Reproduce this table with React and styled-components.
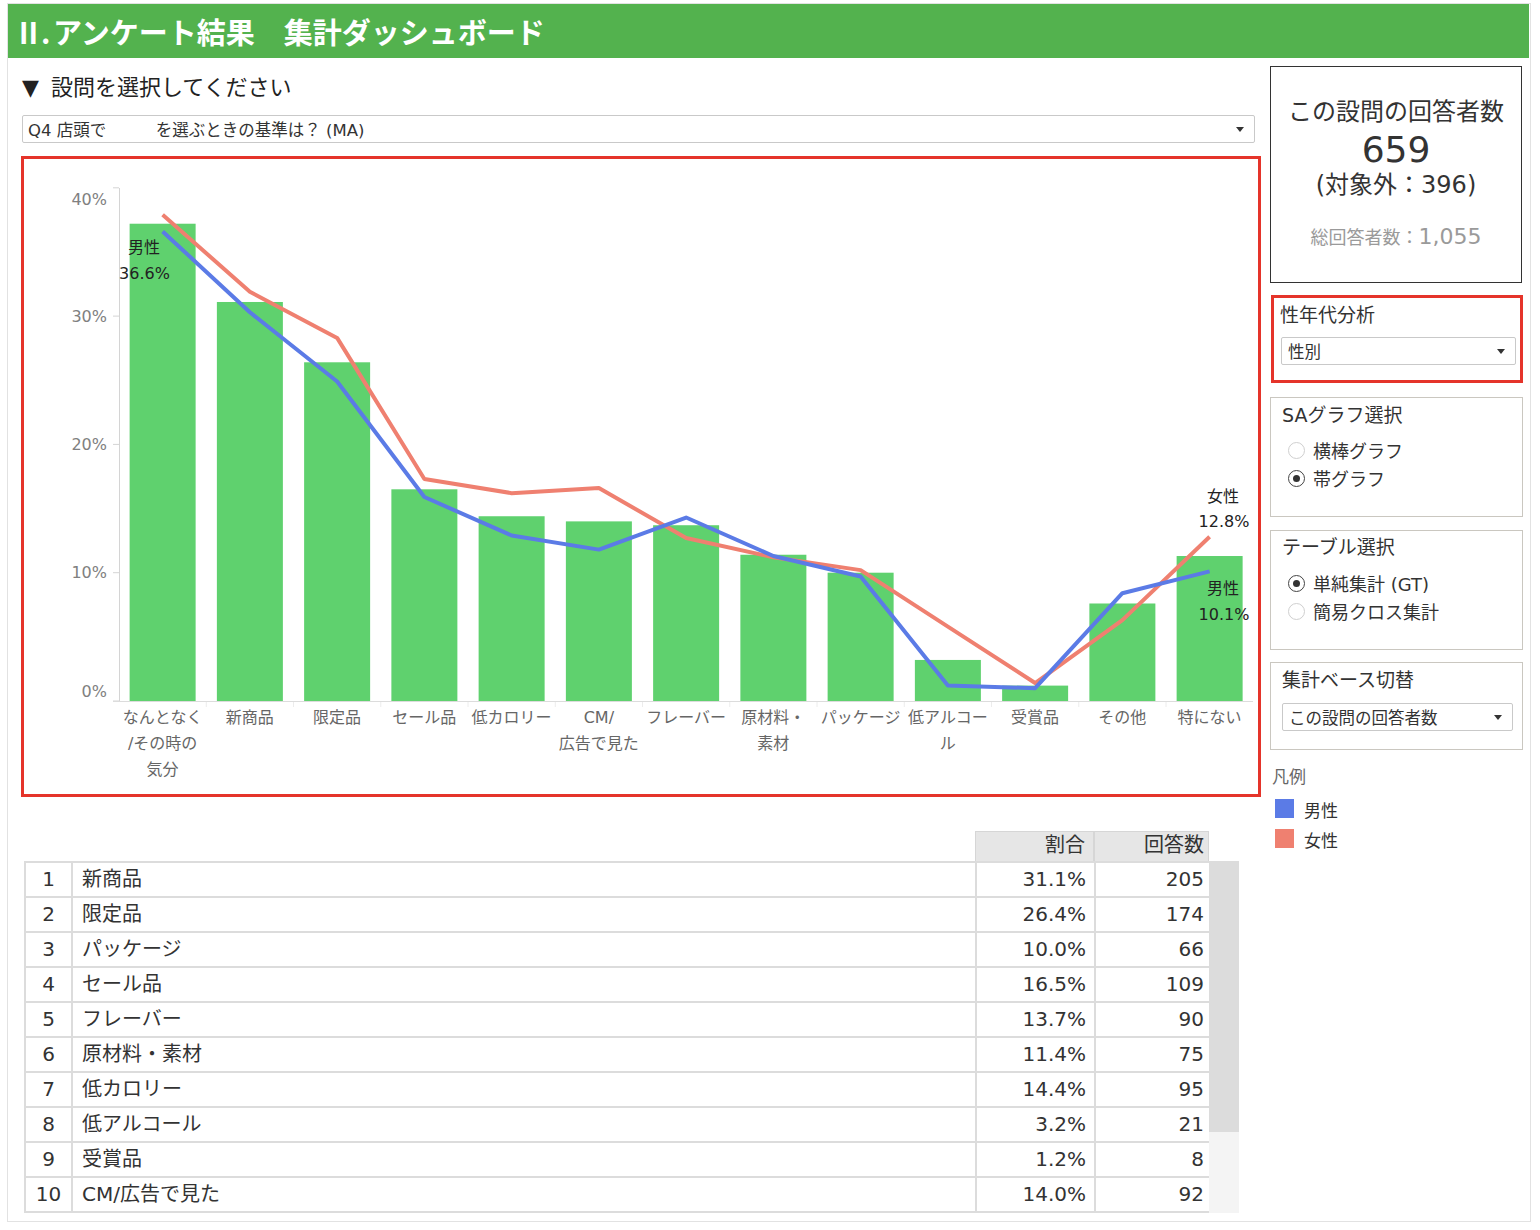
import React from "react";
import styled, { createGlobalStyle } from "styled-components";

const GlobalStyle = createGlobalStyle`
  body {
    margin: 0;
    background: #ffffff;
    font-family: "DejaVu Sans", "Noto Sans CJK JP", sans-serif;
    color: #333;
  }
`;

const Frame = styled.div`
  box-sizing: border-box;
  margin: 3px 0 0 7px;
  width: 1524px;
  height: 1219px;
  border: 1px solid #e2e2e2;
`;

const Header = styled.div`
  height: 54px;
  margin-right: 1px;
  background: #53b24e;
  color: #fff;
  font-family: "Noto Sans CJK JP", sans-serif;
  font-weight: 700;
  font-size: 29px;
  line-height: 54px;
  padding-left: 6px;
  white-space: pre;
`;

const Numeral = styled.span`
  letter-spacing: -2px;
  margin-right: -2px;
`;

const Body = styled.div`
  display: flex;
  align-items: flex-start;
`;

const Main = styled.div`
  width: 1240px;
  margin-left: 13px;
`;

const Side = styled.div`
  width: 253px;
  margin-left: 9px;
`;

const Prompt = styled.div`
  margin-top: 18px;
  padding-left: 1px;
  height: 24px;
  line-height: 24px;
  font-size: 22px;
  color: #222;
  display: flex;
  gap: 12px;
`;

const Select = styled.div`
  box-sizing: border-box;
  display: flex;
  align-items: center;
  justify-content: space-between;
  width: ${(p) => p.$width}px;
  height: 28px;
  margin: ${(p) => p.$margin || "0"};
  padding: 0 10px 0 ${(p) => p.$padLeft || 6}px;
  border: 1px solid #c9c9c9;
  border-radius: 2px;
  background: #fff;
  font-size: 16.5px;
  color: #333;
  white-space: pre;
`;

const Caret = styled.span`
  width: 0;
  height: 0;
  border-left: 4px solid transparent;
  border-right: 4px solid transparent;
  border-top: 5px solid #333;
`;

const ChartBox = styled.div`
  box-sizing: border-box;
  margin-top: 13px;
  width: 1240px;
  height: 641px;
  border: 3px solid #e5342a;
`;

const ChartSvg = styled.svg`
  display: block;
  text {
    font-family: "DejaVu Sans", "Noto Sans CJK JP", sans-serif;
    font-size: 16px;
  }
`;

const TableWrap = styled.div`
  margin: 34px 0 0 3px;
  width: 1215px;
`;

const HeadRow = styled.div`
  display: grid;
  grid-template-columns: 951px 119px 115px;
  height: 30px;
`;

const HeadCell = styled.div`
  box-sizing: border-box;
  background: ${(p) => (p.$blank ? "transparent" : "#e6e6e6")};
  border: ${(p) => (p.$blank ? "none" : "1px solid #d6d6d6")};
  border-bottom: none;
  text-align: right;
  padding-right: ${(p) => p.$pad}px;
  font-size: 20px;
  line-height: 27px;
  color: #333;
`;

const TableBody = styled.div`
  display: flex;
`;

const Grid = styled.div`
  display: grid;
  grid-template-columns: 45px 902px 117px 113px;
  grid-auto-rows: 33px;
  gap: 2px;
  padding: 2px 0 2px 2px;
  background: #dcdcdc;
`;

const Cell = styled.div`
  background: #fff;
  font-size: 20px;
  line-height: 33px;
  color: #333;
  text-align: ${(p) => p.$align || "left"};
  padding: ${(p) => p.$pad || "0"};
  white-space: nowrap;
`;

const ScrollTrack = styled.div`
  width: 30px;
  background: #f4f4f4;
`;

const ScrollThumb = styled.div`
  height: 271px;
  background: #dcdcdc;
`;

const CountCard = styled.div`
  box-sizing: border-box;
  margin-top: 8px;
  width: 252px;
  height: 217px;
  border: 1px solid #333;
  padding-top: 30px;
  display: flex;
  flex-direction: column;
  align-items: center;
  color: #333;
`;

const CountLine = styled.div`
  font-size: ${(p) => p.$size}px;
  line-height: ${(p) => p.$lh}px;
  margin-top: ${(p) => p.$mt || 0}px;
  color: ${(p) => p.$color || "#333"};
  white-space: nowrap;
`;

const Small = styled.span`
  font-size: 18px;
`;

const Card = styled.div`
  box-sizing: border-box;
  width: ${(p) => (p.$alert ? 252 : 253)}px;
  height: ${(p) => p.$h}px;
  margin: ${(p) => p.$mt}px 0 0 ${(p) => (p.$alert ? 1 : 0)}px;
  border: ${(p) => (p.$alert ? "3px solid #e5342a" : "1px solid #cac7c0")};
  padding: ${(p) => p.$pt}px 0 0 ${(p) => (p.$alert ? 6 : 11)}px;
`;

const CardTitle = styled.div`
  font-size: 19px;
  line-height: 22px;
  color: #333;
`;

const RadioList = styled.div`
  margin: ${(p) => p.$mt}px 0 0 6px;
`;

const RadioRow = styled.div`
  display: flex;
  align-items: center;
  gap: 8px;
  height: 28px;
  font-size: 18px;
  color: #333;
`;

const RadioDot = styled.span`
  box-sizing: border-box;
  width: 17px;
  height: 17px;
  border-radius: 50%;
  border: ${(p) => (p.$on ? "1.5px solid #444" : "1px solid #cfcfcf")};
  display: flex;
  align-items: center;
  justify-content: center;
  &::after {
    content: "";
    width: 7px;
    height: 7px;
    border-radius: 50%;
    background: ${(p) => (p.$on ? "#333" : "transparent")};
  }
`;

const LegendTitle = styled.div`
  margin: 17px 0 0 2px;
  font-size: 17px;
  line-height: 20px;
  color: #666;
`;

const LegendList = styled.div`
  margin: 9px 0 0 5px;
`;

const LegendRow = styled.div`
  display: flex;
  align-items: flex-start;
  gap: 10px;
  height: 30px;
`;

const Swatch = styled.span`
  width: 19px;
  height: 19px;
  margin-top: 3px;
  background: ${(p) => p.$color};
`;

const LegendLabel = styled.span`
  font-size: 17px;
  line-height: 31px;
  color: #333;
`;

const cats = [
  { label: ["なんとなく", "/その時の", "気分"], total: 37.2, m: 36.6, f: 37.9 },
  { label: ["新商品"], total: 31.1, m: 30.3, f: 31.9 },
  { label: ["限定品"], total: 26.4, m: 24.9, f: 28.3 },
  { label: ["セール品"], total: 16.5, m: 15.9, f: 17.3 },
  { label: ["低カロリー"], total: 14.4, m: 12.9, f: 16.2 },
  { label: ["CM/", "広告で見た"], total: 14.0, m: 11.8, f: 16.6 },
  { label: ["フレーバー"], total: 13.7, m: 14.3, f: 12.7 },
  { label: ["原材料・", "素材"], total: 11.4, m: 11.3, f: 11.2 },
  { label: ["パッケージ"], total: 10.0, m: 9.7, f: 10.2 },
  { label: ["低アルコー", "ル"], total: 3.2, m: 1.2, f: 5.8 },
  { label: ["受賞品"], total: 1.2, m: 1.0, f: 1.4 },
  { label: ["その他"], total: 7.6, m: 8.4, f: 6.3 },
  { label: ["特にない"], total: 11.3, m: 10.1, f: 12.8 },
];

const rows = [
  ["新商品", "31.1%", "205"],
  ["限定品", "26.4%", "174"],
  ["パッケージ", "10.0%", "66"],
  ["セール品", "16.5%", "109"],
  ["フレーバー", "13.7%", "90"],
  ["原材料・素材", "11.4%", "75"],
  ["低カロリー", "14.4%", "95"],
  ["低アルコール", "3.2%", "21"],
  ["受賞品", "1.2%", "8"],
  ["CM/広告で見た", "14.0%", "92"],
];

const AXIS_X = 119;
const STEP = 87.25;
const BASE = 701;
const PER = 12.83;
const xc = (i) => AXIS_X + STEP * (i + 0.5);
const yv = (v) => BASE - v * PER;

const Chart = () => {
  const male = cats.map((c, i) => `${xc(i)},${yv(c.m)}`).join(" ");
  const female = cats.map((c, i) => `${xc(i)},${yv(c.f)}`).join(" ");
  return (
    <ChartSvg width="1234" height="635" viewBox="24 159 1234 635">
      {[0, 10, 20, 30, 40].map((t) => {
        const y = yv(t);
        const ly = Math.min(Math.max(y, 199), 691);
        return (
          <g key={t}>
            <line x1={113} x2={AXIS_X} y1={y} y2={y} stroke="#d4d4d4" />
            <text x={107} y={ly} textAnchor="end" dominantBaseline="central" fill="#808080">
              {t}%
            </text>
          </g>
        );
      })}
      <line x1={AXIS_X + 0.5} x2={AXIS_X + 0.5} y1={188} y2={BASE} stroke="#d4d4d4" />
      <line x1={113} x2={1253} y1={BASE + 0.5} y2={BASE + 0.5} stroke="#dcdcdc" />
      {cats.slice(1).map((c, i) => (
        <line
          key={i}
          x1={AXIS_X + STEP * (i + 1)}
          x2={AXIS_X + STEP * (i + 1)}
          y1={702}
          y2={707}
          stroke="#ececec"
        />
      ))}
      {cats.map((c, i) => (
        <rect key={i} x={xc(i) - 33} y={yv(c.total)} width={66} height={c.total * PER} fill="#5fd16e" />
      ))}
      <polyline points={female} fill="none" stroke="#ef8070" strokeWidth="4" strokeLinejoin="round" />
      <polyline points={male} fill="none" stroke="#5b7be6" strokeWidth="4" strokeLinejoin="round" />
      {cats.map((c, i) =>
        c.label.map((l, j) => (
          <text
            key={`${i}-${j}`}
            x={xc(i)}
            y={717 + 26 * j}
            textAnchor="middle"
            dominantBaseline="central"
            fill="#666"
          >
            {l}
          </text>
        ))
      )}
      <g fill="#222" textAnchor="middle">
        <text x={144} y={247} dominantBaseline="central">男性</text>
        <text x={144.5} y={273} dominantBaseline="central">36.6%</text>
        <text x={1223} y={496} dominantBaseline="central">女性</text>
        <text x={1224} y={521} dominantBaseline="central">12.8%</text>
        <text x={1223} y={588} dominantBaseline="central">男性</text>
        <text x={1224} y={614} dominantBaseline="central">10.1%</text>
      </g>
    </ChartSvg>
  );
};

const ResultTable = () => (
  <TableWrap>
    <HeadRow>
      <HeadCell $blank />
      <HeadCell $pad={8}>割合</HeadCell>
      <HeadCell $pad={4}>回答数</HeadCell>
    </HeadRow>
    <TableBody>
      <Grid>
        {rows.map((r, i) => (
          <React.Fragment key={i}>
            <Cell $align="center">{i + 1}</Cell>
            <Cell $pad="0 0 0 9px">{r[0]}</Cell>
            <Cell $align="right" $pad="0 8px 0 0">{r[1]}</Cell>
            <Cell $align="right" $pad="0 5px 0 0">{r[2]}</Cell>
          </React.Fragment>
        ))}
      </Grid>
      <ScrollTrack>
        <ScrollThumb />
      </ScrollTrack>
    </TableBody>
  </TableWrap>
);

const Radio = ({ on, children }) => (
  <RadioRow>
    <RadioDot $on={on} />
    {children}
  </RadioRow>
);

const App = () => (
  <>
    <GlobalStyle />
    <Frame>
      <Header>
        <Numeral>Ⅱ.</Numeral>
        {" アンケート結果　集計ダッシュボード"}
      </Header>
      <Body>
        <Main>
          <Prompt>
            <span>▼</span>
            <span>設問を選択してください</span>
          </Prompt>
          <Select $width={1233} $margin="15px 0 0 1px" $padLeft={5}>
            <span>{"Q4 店頭で　　　を選ぶときの基準は？ (MA)"}</span>
            <Caret />
          </Select>
          <ChartBox>
            <Chart />
          </ChartBox>
          <ResultTable />
        </Main>
        <Side>
          <CountCard>
            <CountLine $size={24} $lh={30}>この設問の回答者数</CountLine>
            <CountLine $size={36} $lh={40} $mt={3}>659</CountLine>
            <CountLine $size={24} $lh={30}>(対象外：396)</CountLine>
            <CountLine $size={22} $lh={28} $mt={23} $color="#9a9a9a">
              <Small>総回答者数：</Small>1,055
            </CountLine>
          </CountCard>
          <Card $alert $h={88} $mt={12} $pt={6}>
            <CardTitle>性年代分析</CardTitle>
            <Select $width={235} $margin="11px 0 0 1px">
              <span>性別</span>
              <Caret />
            </Select>
          </Card>
          <Card $h={120} $mt={14} $pt={6}>
            <CardTitle>SAグラフ選択</CardTitle>
            <RadioList $mt={10}>
              <Radio>横棒グラフ</Radio>
              <Radio on>帯グラフ</Radio>
            </RadioList>
          </Card>
          <Card $h={120} $mt={13} $pt={5}>
            <CardTitle>テーブル選択</CardTitle>
            <RadioList $mt={11}>
              <Radio on>単純集計 (GT)</Radio>
              <Radio>簡易クロス集計</Radio>
            </RadioList>
          </Card>
          <Card $h={88} $mt={12} $pt={6}>
            <CardTitle>集計ベース切替</CardTitle>
            <Select $width={231} $margin="12px 0 0 0">
              <span>この設問の回答者数</span>
              <Caret />
            </Select>
          </Card>
          <LegendTitle>凡例</LegendTitle>
          <LegendList>
            <LegendRow>
              <Swatch $color="#5b7be6" />
              <LegendLabel>男性</LegendLabel>
            </LegendRow>
            <LegendRow>
              <Swatch $color="#ef8070" />
              <LegendLabel>女性</LegendLabel>
            </LegendRow>
          </LegendList>
        </Side>
      </Body>
    </Frame>
  </>
);

export default App;
